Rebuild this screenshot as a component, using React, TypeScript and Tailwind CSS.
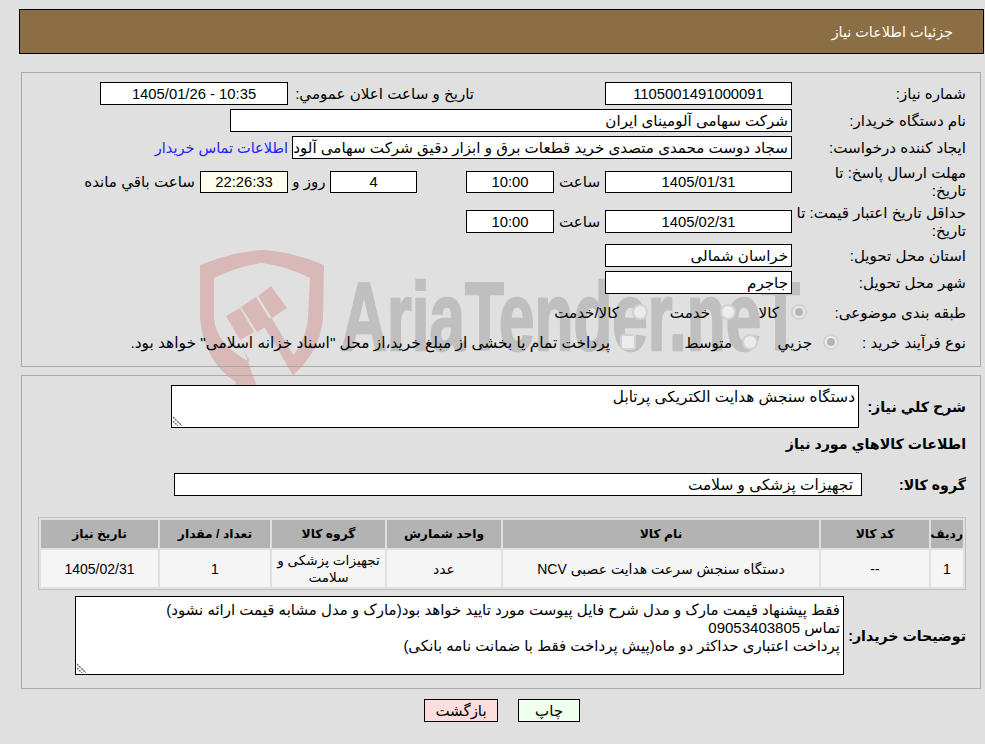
import type { ReactNode } from "react";

const notes =
  "فقط پیشنهاد قیمت مارک و مدل شرح فایل پیوست مورد تایید خواهد بود(مارک و مدل مشابه قیمت ارائه نشود)\nتماس 09053403805\nپرداخت اعتباری حداکثر دو ماه(پیش پرداخت فقط با ضمانت نامه بانکی)";

function Watermark() {
  return (
    <svg dir="ltr" className="absolute top-0 left-0 z-0 pointer-events-none" width="985" height="744" viewBox="0 0 985 744">
      {/* shield */}
      <path
        fill="#d9b8b8"
        d="M200 265 Q232 252 262 250 Q294 252 324 265 L323 318 Q320 352 293 375 L286 364 Q306 342 308 318 L310 278 Q286 266 262 263 Q238 266 214 278 L214 318 Q216 345 250 362 L244 350 L257 387 L233 390 L236 382 Q204 362 200 318 Z"
      />
      {/* hammer */}
      <path fill="#d9b8b8" d="M226 316 L240 308 L254 332 L240 340 Z" />
      <path fill="#d9b8b8" d="M241 307 L256 297 L272 323 L257 332 Z" />
      <path fill="#d9b8b8" d="M258 296 L271 286 L287 308 L272 318 Z" />
      <path fill="#d9b8b8" d="M262 323 L271 317 L297 361 L293 375 Z" />
      {/* wordmark */}
      <text
        x="341"
        y="350"
        direction="ltr"
        fill="#bfbfbf"
        stroke="#bfbfbf"
        strokeWidth="2.5"
        fontFamily="Liberation Sans"
        fontWeight="700"
        fontSize="96"
        textLength="459"
        lengthAdjust="spacingAndGlyphs"
      >
        AriaTender.neT
      </text>
    </svg>
  );
}

function Field({ className, center, children }: { className: string; center?: boolean; children: ReactNode }) {
  return (
    <div
      className={`${className} shrink-0 border border-black bg-white px-[3px] overflow-hidden whitespace-nowrap flex items-center ${
        center ? "justify-center" : ""
      }`}
    >
      {children}
    </div>
  );
}

function Radio({ checked }: { checked?: boolean }) {
  return (
    <span className="w-4 h-4 shrink-0 mb-[3px] rounded-full border-2 border-[#d2d2d2] bg-[#ececec] flex items-center justify-center">
      {checked && <span className="w-2 h-2 rounded-full bg-[#b4b4b4]" />}
    </span>
  );
}

function TextBox({ className, textClass, value }: { className: string; textClass: string; value: string }) {
  return (
    <div className={`${className} relative shrink-0`}>
      <textarea
        readOnly
        defaultValue={value}
        className={`${textClass} block w-full h-full resize-none border border-black bg-white px-[3px] leading-[18px] outline-none`}
      />
      <svg className="absolute left-[2px] bottom-[2px]" width="10" height="10" viewBox="0 0 10 10">
        <path d="M0 1 L9 10 M0 5 L5 10" stroke="#666" strokeWidth="1.4" strokeDasharray="2 1" fill="none" />
      </svg>
    </div>
  );
}

export default function App() {
  return (
    <div
      dir="rtl"
      className="relative isolate w-[985px] h-[744px] overflow-hidden bg-[#e0e0e0] text-[15.1px] leading-[18px] text-black font-['Liberation_Sans','DejaVu_Sans',sans-serif]"
    >
      <Watermark />
      <div className="relative z-10 pt-[9px]">
        {/* title bar */}
        <div className="mr-px w-[965px] h-[45px] border border-black bg-[#8c6e44] text-white text-[14.4px] flex items-center pr-[30px]">
          جزئیات اطلاعات نیاز
        </div>

        {/* first panel */}
        <div className="mt-[18px] mr-[4px] w-[960px] h-[295px] border border-[#a9a9a9] pt-[9px] pr-[14px]">
          <div className="flex items-center h-[23px]">
            <div className="w-[174px] shrink-0">شماره نیاز:</div>
            <Field className="w-[187px] h-[23px] text-[14.8px]" center>1105001491000091</Field>
            <div className="w-[131px] shrink-0" />
            <div className="w-[186px] shrink-0 whitespace-nowrap">تاریخ و ساعت اعلان عمومي:</div>
            <Field className="w-[188px] h-[23px] text-[14.8px]" center>10:35 - 1405/01/26</Field>
          </div>
          <div className="flex items-center h-[23px] mt-[4px]">
            <div className="w-[174px] shrink-0">نام دستگاه خریدار:</div>
            <Field className="w-[562px] h-[23px]">شرکت سهامی آلومینای ایران</Field>
          </div>
          <div className="flex items-center h-[23px] mt-[4px]">
            <div className="w-[174px] shrink-0">ایجاد کننده درخواست:</div>
            <Field className="w-[500px] h-[23px]">سجاد دوست محمدی متصدی خرید قطعات برق و ابزار دقیق شرکت سهامی آلود</Field>
            <a className="mr-[4px] text-[14.5px] text-[#2222ff] whitespace-nowrap">اطلاعات تماس خریدار</a>
          </div>
          <div className="flex items-center h-[33px] mt-[6px]">
            <div className="w-[174px] shrink-0">مهلت ارسال پاسخ: تا<br />تاریخ:</div>
            <Field className="w-[187px] h-[22px] text-[14.8px]" center>1405/01/31</Field>
            <div className="w-[51px] shrink-0 text-center">ساعت</div>
            <Field className="w-[88px] h-[22px] text-[14.8px]" center>10:00</Field>
            <div className="w-[49px] shrink-0" />
            <Field className="w-[87px] h-[22px] text-[14.8px]" center>4</Field>
            <div className="w-[42px] shrink-0 text-center">روز و</div>
            <Field className="w-[88px] h-[22px] text-[14.8px] !bg-[#ffffee]" center>22:26:33</Field>
            <div className="mr-[5px] whitespace-nowrap">ساعت باقي مانده</div>
          </div>
          <div className="flex items-center h-[35px] mt-[6px]">
            <div className="w-[174px] shrink-0 whitespace-nowrap">حداقل تاریخ اعتبار قیمت: تا<br />تاریخ:</div>
            <Field className="w-[187px] h-[23px] text-[14.8px]" center>1405/02/31</Field>
            <div className="w-[51px] shrink-0 text-center">ساعت</div>
            <Field className="w-[88px] h-[23px] text-[14.8px]" center>10:00</Field>
          </div>
          <div className="flex items-center h-[23px] mt-[5px]">
            <div className="w-[174px] shrink-0">استان محل تحویل:</div>
            <Field className="w-[187px] h-[23px]">خراسان شمالی</Field>
          </div>
          <div className="flex items-center h-[23px] mt-[4px]">
            <div className="w-[174px] shrink-0">شهر محل تحویل:</div>
            <Field className="w-[187px] h-[23px]">جاجرم</Field>
          </div>
          <div className="flex items-center h-[22px] mt-[8px]">
            <div className="w-[159px] shrink-0 whitespace-nowrap">طبقه بندی موضوعی:</div>
            <div className="w-[71px] shrink-0 flex items-center"><Radio checked /><span className="mr-[12px]">کالا</span></div>
            <div className="w-[88px] shrink-0 flex items-center"><Radio /><span className="mr-[10px]">خدمت</span></div>
            <div className="flex items-center"><Radio /><span className="mr-[13px]">کالا/خدمت</span></div>
          </div>
          <div className="flex items-center h-[22px] mt-[8px]">
            <div className="w-[127px] shrink-0">نوع فرآیند خرید :</div>
            <div className="w-[81px] shrink-0 flex items-center"><Radio checked /><span className="mr-[11px]">جزیي</span></div>
            <div className="w-[122px] shrink-0 flex items-center"><Radio /><span className="mr-[10px]">متوسط</span></div>
            <div className="flex items-center">
              <span className="w-4 h-4 shrink-0 mb-[3px] rounded-[3px] border-2 border-[#d2d2d2] bg-[#ececec]" />
              <span className="mr-[10px] text-[15.4px] whitespace-nowrap">پرداخت تمام یا بخشی از مبلغ خرید،از محل "اسناد خزانه اسلامی" خواهد بود.</span>
            </div>
          </div>
        </div>

        {/* second panel */}
        <div className="mt-[8px] mr-[4px] w-[960px] h-[314px] border border-[#a9a9a9] pt-[9px] pr-[14px]">
          <div className="flex items-center">
            <div className="w-[107px] shrink-0 font-bold text-[14.2px] whitespace-nowrap">شرح کلي نیاز:</div>
            <TextBox
              className="w-[688px] h-[43px]"
              textClass="py-[2px] text-[15.3px]"
              value="دستگاه سنجش هدایت الکتریکی پرتابل"
            />
          </div>
          <div className="mt-[6px] h-[20px] flex items-center font-bold text-[14.2px]">اطلاعات کالاهاي مورد نیاز</div>
          <div className="flex items-center mt-[19px]">
            <div className="w-[104px] shrink-0 font-bold text-[14.2px] whitespace-nowrap">گروه کالا:</div>
            <Field className="w-[688px] h-[23px] !pr-[8px] text-[15.3px]">تجهیزات پزشکی و سلامت</Field>
          </div>

          <table className="mt-[21px] w-[928px] table-fixed border-separate border-spacing-[2px] border border-[#c0c0c0] text-center text-[14px]">
            <colgroup>
              <col className="w-[32px]" />
              <col className="w-[108px]" />
              <col className="w-[316px]" />
              <col className="w-[114px]" />
              <col className="w-[113px]" />
              <col className="w-[110px]" />
              <col className="w-[117px]" />
            </colgroup>
            <thead>
              <tr className="h-[28px] bg-[#b3b3b3] font-bold text-[12.3px]">
                <th className="p-0">ردیف</th>
                <th className="p-0">کد کالا</th>
                <th className="p-0">نام کالا</th>
                <th className="p-0">واحد شمارش</th>
                <th className="p-0">گروه کالا</th>
                <th className="p-0">تعداد / مقدار</th>
                <th className="p-0">تاریخ نیاز</th>
              </tr>
            </thead>
            <tbody>
              <tr className="h-[37px] bg-[#f5f5f5]">
                <td className="p-0">1</td>
                <td className="p-0">--</td>
                <td className="p-0">دستگاه سنجش سرعت هدایت عصبی NCV</td>
                <td className="p-0">عدد</td>
                <td className="p-0 text-[13.6px] leading-[17px]">تجهیزات پزشکی و سلامت</td>
                <td className="p-0">1</td>
                <td className="p-0">1405/02/31</td>
              </tr>
            </tbody>
          </table>

          <div className="flex items-center mt-[6px]">
            <div className="w-[122px] shrink-0 font-bold text-[14.2px] whitespace-nowrap">توضیحات خریدار:</div>
            <TextBox className="w-[769px] h-[79px]" textClass="py-[4px] text-[15px]" value={notes} />
          </div>
        </div>

        {/* buttons */}
        <div className="mt-[10px] w-[985px] flex justify-center gap-[20px] pl-[19px]">
          <button className="w-[62px] h-[23px] border border-black bg-[#eeffee] text-[15px]">چاپ</button>
          <button className="w-[74px] h-[23px] border border-black bg-[#ffdddd] text-[15px]">بازگشت</button>
        </div>
      </div>
    </div>
  );
}
